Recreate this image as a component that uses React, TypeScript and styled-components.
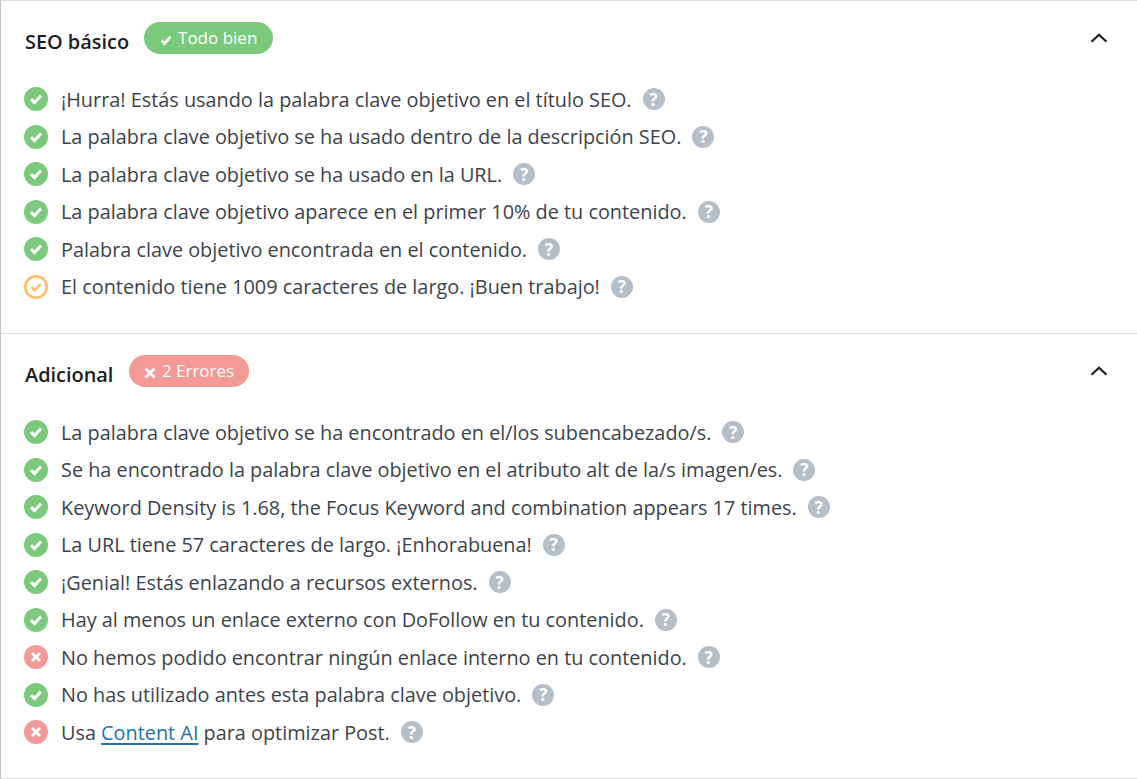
import React from "react";
import styled, { createGlobalStyle } from "styled-components";

const Global = createGlobalStyle`
  html, body {
    margin: 0;
    padding: 0;
    background: #fff;
  }
  body {
    font-family: "Open Sans", "Noto Sans", sans-serif;
    overflow: hidden;
  }
`;

const Wrapper = styled.div`
  width: 1137px;
  height: 779px;
  box-sizing: border-box;
  border-left: 1px solid #c3c4c7;
  border-top: 1px solid #dcdcde;
  border-bottom: 1px solid #dcdcde;
  background: #fff;
`;

const Section = styled.section<{ $height: number }>`
  height: ${(p) => p.$height}px;
  box-sizing: border-box;
  padding: 21px 0 0 23px;
  & + & {
    border-top: 1px solid #dcdcde;
  }
`;

const Header = styled.div`
  display: flex;
  align-items: center;
  height: 32px;
  padding: 0 29px 0 1px;
  margin-bottom: 26.5px;
`;

const Title = styled.h3`
  margin: 6px 0 0;
  font-size: 19.9px;
  font-weight: 600;
  color: #1a1e23;
`;

const Badge = styled.span<{ $bg: string; $px: number; $left: number }>`
  display: inline-flex;
  align-items: center;
  box-sizing: border-box;
  height: 32px;
  margin-left: ${(p) => p.$left}px;
  padding: 0 ${(p) => p.$px}px 2px;
  gap: 6px;
  border-radius: 16px;
  background: ${(p) => p.$bg};
  color: #fff;
  font-size: 17px;

  svg {
    margin-top: 5px;
  }
`;

const Chevron = styled.svg`
  margin-left: auto;
  display: block;
`;

const List = styled.ul`
  list-style: none;
  margin: 0;
  padding: 0;
`;

const Row = styled.li`
  display: flex;
  align-items: center;
  height: 37.5px;
  font-size: 19.85px;
  color: #3c434a;
`;

const Message = styled.span`
  margin-left: 13px;
  white-space: nowrap;
`;

const Help = styled.span`
  display: inline-flex;
  align-items: center;
  justify-content: center;
  width: 22px;
  height: 22px;
  margin-left: 11px;
  border-radius: 50%;
  background: #b5bfc9;
  color: #fff;
  font-size: 17px;
  font-weight: 700;
`;

const Link = styled.a`
  color: #2271b1;
  text-decoration: underline;
  text-decoration-thickness: 2px;
  text-underline-offset: 3px;
`;

type Status = "ok" | "warn" | "fail";

const StatusIcon = ({ status }: { status: Status }) => {
  if (status === "warn") {
    return (
      <svg width="24" height="24" viewBox="0 0 24 24" style={{ flex: "none" }}>
        <circle cx="12" cy="12" r="10.7" fill="none" stroke="#ffbc62" strokeWidth="2.6" />
        <path d="M7.5 12.2l3.2 3.2 6-6.4" fill="none" stroke="#ffbc62" strokeWidth="2.4" />
      </svg>
    );
  }
  if (status === "fail") {
    return (
      <svg width="24" height="24" viewBox="0 0 24 24" style={{ flex: "none" }}>
        <circle cx="12" cy="12" r="12" fill="#f49a96" />
        <path d="M8 8l8 8M16 8l-8 8" fill="none" stroke="#fff" strokeWidth="3" />
      </svg>
    );
  }
  return (
    <svg width="24" height="24" viewBox="0 0 24 24" style={{ flex: "none" }}>
      <circle cx="12" cy="12" r="12" fill="#7bca7c" />
      <path d="M7 12.2l3.5 3.4 6.5-7" fill="none" stroke="#fff" strokeWidth="3" />
    </svg>
  );
};

const Item = ({ status, children }: { status: Status; children: React.ReactNode }) => (
  <Row>
    <StatusIcon status={status} />
    <Message>{children}</Message>
    <Help>?</Help>
  </Row>
);

const Up = () => (
  <Chevron width="18" height="12" viewBox="0 0 18 12">
    <path d="M1.5 9.7L9 2.8l7.5 6.9" fill="none" stroke="#1a1e23" strokeWidth="2.2" />
  </Chevron>
);

const App = () => (
  <>
    <Global />
    <Wrapper>
      <Section $height={332}>
        <Header>
          <Title>SEO básico</Title>
          <Badge $bg="#7bca7c" $px={16} $left={15}>
            <svg width="12" height="12" viewBox="0 0 12 12">
              <path d="M1.5 6.5l3 3 6-7" fill="none" stroke="#fff" strokeWidth="2.6" />
            </svg>
            Todo bien
          </Badge>
          <Up />
        </Header>
        <List>
          <Item status="ok">¡Hurra! Estás usando la palabra clave objetivo en el título SEO.</Item>
          <Item status="ok">La palabra clave objetivo se ha usado dentro de la descripción SEO.</Item>
          <Item status="ok">La palabra clave objetivo se ha usado en la URL.</Item>
          <Item status="ok">La palabra clave objetivo aparece en el primer 10% de tu contenido.</Item>
          <Item status="ok">Palabra clave objetivo encontrada en el contenido.</Item>
          <Item status="warn">El contenido tiene 1009 caracteres de largo. ¡Buen trabajo!</Item>
        </List>
      </Section>
      <Section $height={445}>
        <Header>
          <Title>Adicional</Title>
          <Badge $bg="#f49a96" $px={14.5} $left={16}>
            <svg width="12" height="12" viewBox="0 0 12 12">
              <path d="M1.5 1.5l9 9M10.5 1.5l-9 9" fill="none" stroke="#fff" strokeWidth="2.8" />
            </svg>
            2 Errores
          </Badge>
          <Up />
        </Header>
        <List>
          <Item status="ok">La palabra clave objetivo se ha encontrado en el/los subencabezado/s.</Item>
          <Item status="ok">Se ha encontrado la palabra clave objetivo en el atributo alt de la/s imagen/es.</Item>
          <Item status="ok">Keyword Density is 1.68, the Focus Keyword and combination appears 17 times.</Item>
          <Item status="ok">La URL tiene 57 caracteres de largo. ¡Enhorabuena!</Item>
          <Item status="ok">¡Genial! Estás enlazando a recursos externos.</Item>
          <Item status="ok">Hay al menos un enlace externo con DoFollow en tu contenido.</Item>
          <Item status="fail">No hemos podido encontrar ningún enlace interno en tu contenido.</Item>
          <Item status="ok">No has utilizado antes esta palabra clave objetivo.</Item>
          <Item status="fail">
            Usa <Link href="#">Content AI</Link> para optimizar Post.
          </Item>
        </List>
      </Section>
    </Wrapper>
  </>
);

export default App;
